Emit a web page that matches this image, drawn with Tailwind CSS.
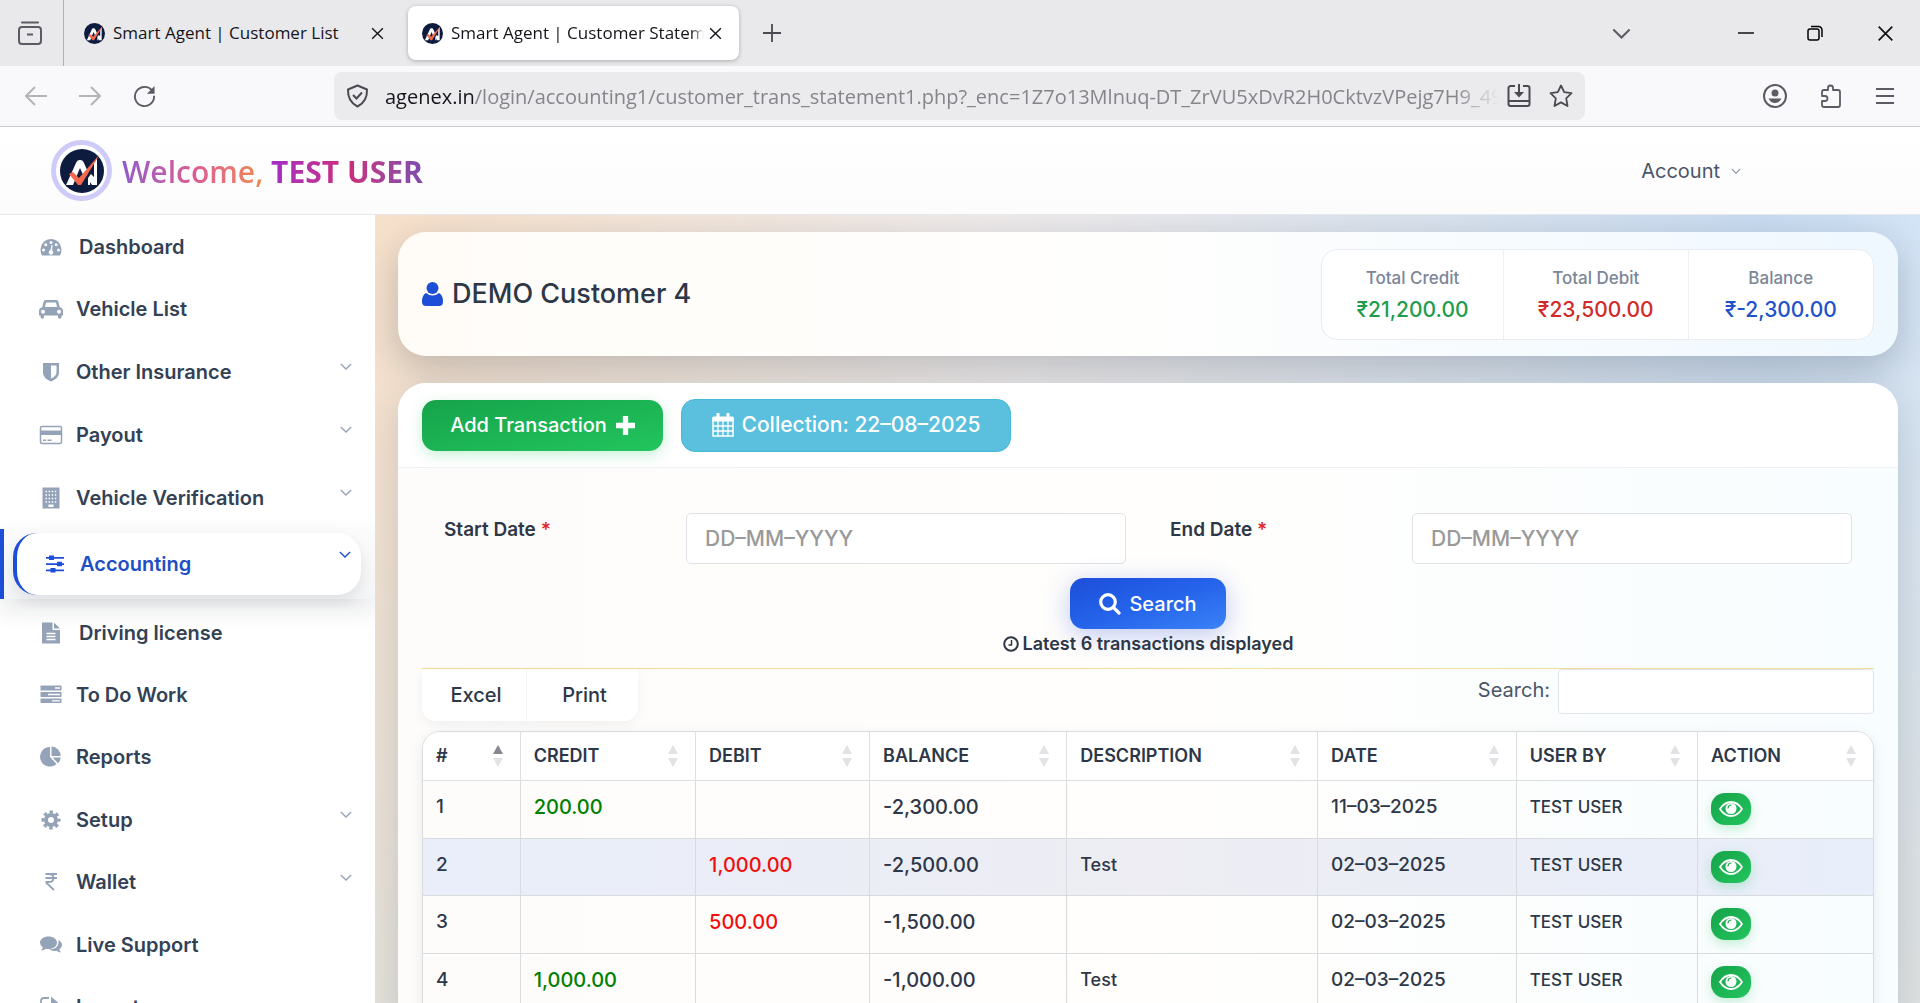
<!DOCTYPE html>
<html lang="en">
  <head>
    <meta charset="UTF-8" />
    <meta name="viewport" content="width=device-width, initial-scale=1.0" />
    <script src="https://cdn.jsdelivr.net/npm/@tailwindcss/browser@4"></script>
    <title>Smart Agent | Customer Statement</title>
  </head>
  <body class="h-screen flex flex-col overflow-hidden bg-white text-[#2d3748] font-[Inter,sans-serif]">
    <!-- shared icons -->
    <svg class="hidden">
      <symbol id="logo" viewBox="0 0 44 44">
        <circle cx="22" cy="22" r="22" fill="#0d1b3e" />
        <path d="M6 36 16 14q1-3 4-3t4 3l4 9-4 5-4-9-7 17zM28 36v-7l3-4 3 3V14l3-5v27h-5l-2-3v3z" fill="#fff" />
        <path d="m9 25 4-2 6 6L40 5 21 36h-3z" fill="#f4694c" />
      </symbol>
      <symbol id="close" viewBox="0 0 14 14">
        <path d="m2 2 10 10M12 2 2 12" fill="none" stroke="currentColor" stroke-width="1.300" />
      </symbol>
      <symbol id="chevron" viewBox="0 0 14 8">
        <path d="m1 1 6 6 6-6" fill="none" stroke="currentColor" stroke-width="1.500" />
      </symbol>
      <symbol id="sort" viewBox="0 0 10 24">
        <path d="m5 1 5 9H0z" fill="#e1e3e6" />
        <path d="m5 23 5-9H0z" fill="#e1e3e6" />
      </symbol>
      <symbol id="sort-asc" viewBox="0 0 10 24">
        <path d="m5 1 5 9H0z" fill="#85888f" />
        <path d="m5 23 5-9H0z" fill="#e1e3e6" />
      </symbol>
      <symbol id="eye" viewBox="0 0 24 16">
        <path d="M1 8q4.500-7 11-7t11 7q-4.500 7-11 7T1 8z" fill="none" stroke="currentColor" stroke-width="1.800" />
        <circle cx="12" cy="7.500" r="5.500" fill="currentColor" />
        <path d="M9 7q.3-2.600 3-3" fill="none" stroke="#1aa850" stroke-width="1.200" stroke-linecap="round" />
      </symbol>
    </svg>

    <!-- browser tabs -->
    <div class="flex h-[66px] shrink-0 items-center bg-[#e9e9eb] text-[17px] text-[#15141a] font-['Open_Sans',sans-serif]">
      <button class="flex h-full w-16 items-center justify-center border-r border-[#b0b0b4] pr-[3px] text-[#5b5b66]" aria-label="Firefox View">
        <svg class="size-6" viewBox="0 0 24 24" fill="none" stroke="currentColor" stroke-width="2">
          <path d="M4 1.500h16" stroke-linecap="round" />
          <rect x="1" y="6" width="22" height="17" rx="3" />
          <path d="M9 13.500h6" />
        </svg>
      </button>
      <div class="flex h-[54px] w-[338px] items-center pl-5 pr-[17px]">
        <svg class="mr-2 size-[21px]"><use href="#logo" /></svg>
        <button class="flex-1 whitespace-nowrap text-left">Smart Agent | Customer List</button>
        <button class="ml-2" aria-label="Close tab"><svg class="size-[15px]"><use href="#close" /></svg></button>
      </div>
      <div class="ml-[6px] flex h-[54px] w-[331px] items-center rounded-lg bg-white pl-[14px] pr-4 shadow-[0_1px_4px_#0004]">
        <svg class="mr-2 size-[21px] shrink-0"><use href="#logo" /></svg>
        <button class="w-[253px] overflow-hidden whitespace-nowrap text-left [mask-image:linear-gradient(to_right,black_95%,transparent)]">Smart Agent | Customer Statement</button>
        <button class="ml-1" aria-label="Close tab"><svg class="size-[15px]"><use href="#close" /></svg></button>
      </div>
      <button class="ml-[23px]" aria-label="New tab">
        <svg class="size-5 text-[#4a4a52]" viewBox="0 0 20 20" fill="none" stroke="currentColor" stroke-width="1.800"><path d="M10 1v18M1 10h18" /></svg>
      </button>
      <div class="ml-auto flex items-center pr-[25px]">
        <button class="mr-[107px]" aria-label="List all tabs"><svg class="h-[11px] w-[19px] text-[#5b5b66]"><use href="#chevron" /></svg></button>
        <button class="mr-[53px]" aria-label="Minimize"><svg class="size-4" viewBox="0 0 16 16"><path d="M0 8h16" stroke="#000" stroke-width="1.400" /></svg></button>
        <button class="mr-[53px]" aria-label="Restore">
          <svg class="size-4" viewBox="0 0 16 16" fill="none" stroke="#000" stroke-width="1.500">
            <rect x="1" y="4" width="11" height="11" rx="2" />
            <path d="M4 1.500h7.500a3.500 3.500 0 0 1 3.500 3.500v7" />
          </svg>
        </button>
        <button aria-label="Close window"><svg class="size-[19px]"><use href="#close" /></svg></button>
      </div>
    </div>

    <!-- browser toolbar -->
    <div class="flex h-[61px] shrink-0 items-center border-b border-[#ccccd1] bg-[#f9f9fb] text-[#5b5b66]">
      <div class="flex w-[334px] items-center gap-8 pl-[25px]">
        <button aria-label="Back" class="text-[#b4b4b9]">
          <svg class="size-[22px]" viewBox="0 0 22 22" fill="none" stroke="currentColor" stroke-width="2"><path d="M22 11H2M10 2l-9 9 9 9" /></svg>
        </button>
        <button aria-label="Forward" class="text-[#b4b4b9]">
          <svg class="size-[22px]" viewBox="0 0 22 22" fill="none" stroke="currentColor" stroke-width="2"><path d="M0 11h20M12 2l9 9-9 9" /></svg>
        </button>
        <button aria-label="Reload">
          <svg class="size-[23px]" viewBox="0 0 24 24" fill="none" stroke="currentColor" stroke-width="2">
            <path d="M20 6a10 10 0 1 0 2 6" stroke-linecap="round" />
            <path d="M22.500 1v8h-8z" fill="currentColor" stroke="none" />
          </svg>
        </button>
      </div>
      <div class="flex h-12 w-[1251px] items-center rounded-lg bg-[#ebebed] px-3">
        <svg class="h-6 w-[23px] shrink-0" viewBox="0 0 23 24" fill="none" stroke="#4a4a52" stroke-width="2">
          <path d="m11.500 1.500 9.500 4q.5 12-9.500 17Q1.500 17.500 2 5.500z" stroke-linejoin="round" />
          <path d="m7 11 3.500 3.500L16 8.500" />
        </svg>
        <div role="textbox" aria-label="Address" class="ml-4 flex-1 overflow-hidden whitespace-nowrap pt-px text-xl text-[#85858c] font-['Open_Sans',sans-serif] [mask-image:linear-gradient(to_right,black_96%,transparent)]"><span class="text-[#15141a]">agenex.in</span>/login/accounting1/customer_trans_statement1.php?_enc=1Z7o13Mlnuq-DT_ZrVU5xDvR2H0CktvzVPejg7H9_49I</div>
        <button aria-label="Install" class="ml-2">
          <svg class="size-6" viewBox="0 0 24 24" fill="none" stroke="#4a4a52" stroke-width="2">
            <path d="M8 2H3.500A2 2 0 0 0 1.500 4v16a2 2 0 0 0 2 2h17a2 2 0 0 0 2-2V4a2 2 0 0 0-2-2H16M2 17h20" />
            <path d="M12 0v9" /><path d="M7 8h10l-5 5.500z" fill="#4a4a52" stroke="none" />
          </svg>
        </button>
        <button aria-label="Bookmark" class="ml-[18px]">
          <svg class="size-6" viewBox="0 0 24 24" fill="none" stroke="#4a4a52" stroke-width="1.800" stroke-linejoin="round">
            <path d="m12 1.500 3.200 6.700 7.300 1-5.300 5.100 1.300 7.700-6.500-3.600L5.500 22l1.300-7.700L1.500 9.200l7.300-1z" />
          </svg>
        </button>
      </div>
      <div class="ml-auto flex items-center gap-8 pr-[25px]">
        <button aria-label="Profile">
          <svg class="size-6" viewBox="0 0 24 24" fill="currentColor">
            <circle cx="12" cy="12" r="11" fill="none" stroke="currentColor" stroke-width="2" />
            <circle cx="12" cy="9" r="3.500" /><path d="M5.500 14.500h13q-2.500 4.500-6.500 4.500t-6.500-4.500z" />
          </svg>
        </button>
        <button aria-label="Extensions">
          <svg class="size-6" viewBox="0 0 24 24" fill="none" stroke="currentColor" stroke-width="1.800" stroke-linejoin="round">
            <path d="M3 10V8q0-2 2-2h4V4a2.500 2.500 0 0 1 5 0v2h5q2 0 2 2v13q0 2-2 2H5q-2 0-2-2v-4h3a2.500 2.500 0 0 0 0-5H3z" />
          </svg>
        </button>
        <button aria-label="Menu">
          <svg class="h-4 w-5" viewBox="0 0 20 16" stroke="currentColor" stroke-width="1.800"><path d="M1 1h18M1 8h18M1 15h18" /></svg>
        </button>
      </div>
    </div>

    <!-- app header -->
    <header class="flex h-[88px] shrink-0 items-center justify-between border-b border-[#e6e8ec] bg-linear-to-b from-white to-[#fcfcfc] pl-[51px] pr-[179px]">
      <div class="flex items-center gap-[10px]">
        <div class="flex size-[61px] items-center justify-center rounded-full border-[5px] border-[#cfcbf8] bg-white">
          <svg class="size-11"><use href="#logo" /></svg>
        </div>
        <h1 class="pt-[2px] text-[30px] leading-10 font-semibold font-['Open_Sans',sans-serif]">
          <span class="bg-linear-to-r from-[#8f5bc9] via-[#dc5a94] to-[#ee8a4a] bg-clip-text text-transparent">Welcome,</span>
          <span class="bg-linear-to-r from-[#a32cc4] via-[#cc2a7c] to-[#7c4bb0] bg-clip-text font-bold text-transparent">TEST USER</span>
        </h1>
      </div>
      <button class="flex items-center gap-[11px] text-xl text-[#4a5568]">
        Account
        <svg class="h-[6px] w-[10px] text-[#8a94a6]"><use href="#chevron" /></svg>
      </button>
    </header>

    <div class="flex min-h-0 flex-1">
      <!-- sidebar -->
      <nav class="w-[375px] shrink-0 overflow-hidden bg-white pt-px text-xl font-semibold text-[#334155]">
        <a href="#" class="flex h-[62px] items-center pl-[39px]">
          <svg class="mr-4 size-6 text-[#94a3b8]" viewBox="0 0 24 24" fill="currentColor">
            <path d="M1.500 14.500a10.500 10.500 0 0 1 21 0q0 3-1.500 6H3q-1.500-3-1.500-6z" />
            <g fill="#fff"><circle cx="4.500" cy="15" r="1.500" /><circle cx="6.800" cy="9.800" r="1.500" /><circle cx="12" cy="7.500" r="1.500" /><circle cx="17.200" cy="9.800" r="1.500" /><circle cx="19.500" cy="15" r="1.500" /><path d="m12.500 10 1.200.3-.7 5a2.300 2.300 0 1 1-1.500-.2z" /></g>
          </svg>
          Dashboard
        </a>
        <a href="#" class="flex h-[62px] items-center pl-[39px]">
          <svg class="mr-[13px] size-6 text-[#94a3b8]" viewBox="0 0 24 24" fill="currentColor" fill-rule="evenodd">
            <path d="M6.500 3h11q1.500 0 2 2l1.300 5.200Q24 11 24 14v4.500h-1.500V20a1.700 1.700 0 0 1-3.500 0v-1.500H5V20a1.700 1.700 0 0 1-3.500 0v-1.500H0V14q0-3 3.200-3.800L4.500 5q.5-2 2-2zM7 5.500 6 10h12l-1-4.500zM4 12.800a2 2 0 1 0 0 4 2 2 0 0 0 0-4zm16 0a2 2 0 1 0 0 4 2 2 0 0 0 0-4z" />
          </svg>
          Vehicle List
        </a>
        <a href="#" class="flex h-[63px] items-center pl-[39px] pr-[23px]">
          <svg class="mr-[13px] size-6 text-[#94a3b8]" viewBox="0 0 24 24" fill="currentColor" fill-rule="evenodd">
            <path d="M4 3h16v10q0 5-8 8.500Q4 18 4 13zm8 2.500v13q5.500-2.500 5.500-6v-7z" />
          </svg>
          Other Insurance
          <svg class="mb-[10px] ml-auto h-[7px] w-3 text-[#94a3b8]"><use href="#chevron" /></svg>
        </a>
        <a href="#" class="flex h-[63px] items-center pl-[39px] pr-[23px]">
          <svg class="mr-[13px] size-6 text-[#94a3b8]" viewBox="0 0 24 24" fill="currentColor">
            <rect x="1.500" y="3.500" width="21" height="17" rx="1.500" fill="none" stroke="currentColor" stroke-width="1.500" />
            <path d="M1 7.500h22v4.500H1zM4 16.500h3V18H4zM8.500 16.500h4V18h-4z" />
          </svg>
          Payout
          <svg class="mb-[10px] ml-auto h-[7px] w-3 text-[#94a3b8]"><use href="#chevron" /></svg>
        </a>
        <a href="#" class="flex h-[63px] items-center pl-[39px] pr-[23px]">
          <svg class="mr-[13px] size-6 text-[#94a3b8]" viewBox="0 0 24 24" fill="currentColor">
            <path d="M3.500 1.500h17v21h-17z" />
            <path d="M6.500 5.500h11M6.500 9h11M6.500 12.500h11M6.500 16h11" stroke="#fff" stroke-width="1.500" stroke-dasharray="1.500 1.600" />
            <path d="M9.500 18.500h5v2.500h-5z" fill="#fff" />
          </svg>
          Vehicle Verification
          <svg class="mb-[10px] ml-auto h-[7px] w-3 text-[#94a3b8]"><use href="#chevron" /></svg>
        </a>
        <div class="relative h-[70px] border-l-4 border-[#1d4ed8] bg-linear-to-b from-[#fbfbfb] to-[#f4f5f6] py-1 pl-[9px] pr-[14px] shadow-[0_10px_24px_#0f172a1c]">
          <a href="#" class="flex h-[62px] items-center rounded-[24px] border-l-4 border-[#1d4ed8] bg-white pl-[26px] pr-[10px] text-[#1e4fc4] shadow-[0_6px_14px_#0f172a18]">
            <svg class="mr-[13px] size-6 text-[#1d4ed8]" viewBox="0 0 24 24" fill="currentColor">
              <path d="M3 5h18v1.800H3zM3 11.200h18V13H3zM3 17.500h18v1.800H3z" /><path d="M6 3.500h5v4.500H6zM14 9.800h5v4.500h-5zM7.500 16h5v4.500h-5z" />
            </svg>
            Accounting
            <svg class="mb-5 ml-auto h-[7px] w-3"><use href="#chevron" /></svg>
          </a>
        </div>
        <a href="#" class="mt-[3px] flex h-[62px] items-center pl-[39px]">
          <svg class="mr-4 size-6 text-[#94a3b8]" viewBox="0 0 24 24" fill="currentColor">
            <path d="M3 1.500h10.500V9H21v13.500H3zM15 1.500 21 7.500h-6z" />
            <path d="M7.500 12.500h9M7.500 15.500h9M7.500 18.500h9" stroke="#fff" stroke-width="1.300" />
          </svg>
          Driving license
        </a>
        <a href="#" class="flex h-[62px] items-center pl-[39px]">
          <svg class="mr-[13px] size-6 text-[#94a3b8]" viewBox="0 0 24 24" fill="currentColor">
            <rect x="1.500" y="2.500" width="21" height="5" rx=".8" /><rect x="1.500" y="9" width="21" height="5" rx=".8" /><rect x="1.500" y="15.500" width="21" height="4.500" rx=".8" />
            <path d="M16 5h5M9 11.500h12M13 17.800h8" stroke="#fff" stroke-width="1.300" />
          </svg>
          To Do Work
        </a>
        <a href="#" class="flex h-[62px] items-center pl-[39px]">
          <svg class="mr-[13px] size-6 text-[#94a3b8]" viewBox="0 0 24 24" fill="currentColor">
            <path d="M11 2v10l6.500 7A9.800 9.800 0 1 1 11 2z" /><path d="M12.500 1.500a9.500 9.500 0 0 1 9.200 9.500h-9.200z" /><path d="M13.500 12.500h8.200q-.2 3.300-2.700 5.700z" />
          </svg>
          Reports
        </a>
        <a href="#" class="flex h-[63px] items-center pl-[39px] pr-[23px]">
          <svg class="mr-[13px] size-6 text-[#94a3b8]" viewBox="0 0 24 24" fill="none" stroke="currentColor">
            <circle cx="12" cy="12" r="5" stroke-width="4" />
            <circle cx="12" cy="12" r="8" stroke-width="3" stroke-dasharray="3.400 2.880" stroke-dashoffset="1.700" />
          </svg>
          Setup
          <svg class="mb-[10px] ml-auto h-[7px] w-3 text-[#94a3b8]"><use href="#chevron" /></svg>
        </a>
        <a href="#" class="flex h-[62px] items-center pl-[39px] pr-[23px]">
          <svg class="mr-[13px] size-6 text-[#94a3b8]" viewBox="0 0 24 24" fill="none" stroke="currentColor" stroke-width="1.800">
            <path d="M6.500 4H18M6.500 8H18M6.500 12H10q4.500 0 4.500-4T10 4M7 12.500l8 7.500" />
          </svg>
          Wallet
          <svg class="mb-[10px] ml-auto h-[7px] w-3 text-[#94a3b8]"><use href="#chevron" /></svg>
        </a>
        <a href="#" class="flex h-[63px] items-center pl-[39px]">
          <svg class="mr-[13px] size-6 text-[#94a3b8]" viewBox="0 0 24 24" fill="currentColor">
            <path d="M9.500 3.500c4.800 0 8.500 2.700 8.500 6.200s-3.700 6.300-8.500 6.300q-1.500 0-2.700-.3Q4.600 17.600 2 17.600q1.600-1.300 1.800-3.200Q1 12.500 1 9.700c0-3.500 3.700-6.200 8.500-6.200z" />
            <path d="M19.300 7q3.700 1.800 3.700 5 0 2.600-2.600 4.500.2 1.600 1.800 3-2.700 0-4.700-1.700-4 .8-7.500-1.200 8.500 0 9.500-6.500.2-1.500-.2-3.100z" />
          </svg>
          Live Support
        </a>
        <a href="#" class="flex h-[62px] items-center pl-[39px]">
          <svg class="mr-[13px] size-6 text-[#94a3b8]" viewBox="0 0 24 24" fill="none" stroke="currentColor" stroke-width="1.800">
            <path d="M10 3H5q-3 0-3 3v12q0 3 3 3h12q3 0 3-3v-4" /><path d="M12 1.500 19.500 8 12 14z" fill="currentColor" stroke="none" />
          </svg>
          Import
        </a>
      </nav>

      <!-- content -->
      <main class="min-w-0 flex-1 overflow-hidden bg-[linear-gradient(to_bottom,transparent,#e0e1ddd8),linear-gradient(to_right,#f7e0ca,#efebeb_40%,#c9dcf1_90%,#d3e4f6)] pt-[17px] pl-[23px] pr-[22px]">
        <section class="flex h-[124px] items-center justify-between rounded-[28px] bg-linear-to-r from-[#fffcf8] via-[#fefefd] to-[#eff8ff] px-6 shadow-[0_12px_36px_#0f172a38]">
          <h2 class="flex items-center gap-[9px] text-[27px] leading-9 font-medium">
            <svg class="h-6 w-[21px] text-[#1d4ed8]" viewBox="0 0 21 24" fill="currentColor">
              <circle cx="10.500" cy="6" r="6" /><path d="M4 11q6.500 5 13 0 4 2 4 8.500 0 4.500-4 4.500H4q-4 0-4-4.500Q0 13 4 11z" />
            </svg>
            DEMO Customer 4
          </h2>
          <dl class="grid h-[91px] w-[553px] grid-cols-[182px_1fr_1fr] divide-x divide-[#edf0f3] rounded-2xl border border-[#e8ecf1] bg-white text-center">
            <div class="pt-3">
              <dt class="text-[17px] leading-8 font-medium text-[#7b8698]">Total Credit</dt>
              <dd class="text-[21px] leading-8 font-medium text-[#1f9d4d]">₹21,200.00</dd>
            </div>
            <div class="pt-3">
              <dt class="text-[17px] leading-8 font-medium text-[#7b8698]">Total Debit</dt>
              <dd class="text-[21px] leading-8 font-medium text-[#d12b2b]">₹23,500.00</dd>
            </div>
            <div class="pt-3">
              <dt class="text-[17px] leading-8 font-medium text-[#7b8698]">Balance</dt>
              <dd class="text-[21px] leading-8 font-medium text-[#2251c9]">₹-2,300.00</dd>
            </div>
          </dl>
        </section>

        <section class="mt-[27px] rounded-t-[28px] bg-linear-to-r from-[#fdfcfb] via-[#fffefc] to-[#f8fdff] shadow-[0_12px_36px_#0f172a24]">
          <div class="flex h-[85px] items-center gap-[18px] rounded-t-[28px] border-b border-[#f0f1f3] bg-white px-6 text-xl font-medium text-white">
            <button class="flex h-[51px] w-[241px] items-center justify-center gap-[9px] rounded-[14px] bg-linear-to-br from-[#16a34a] to-[#22c55e] shadow-[0_4px_14px_#22c55e40]">
              Add Transaction
              <svg class="size-[19px]" viewBox="0 0 18 18" fill="currentColor"><path d="M6.500 0h5v6.500H18v5h-6.500V18h-5v-6.500H0v-5h6.500z" /></svg>
            </button>
            <button class="flex h-[53px] w-[330px] items-center justify-center gap-2 rounded-[14px] border border-[#46b8da] bg-[#5bc0de] text-[21px]">
              <svg class="h-6 w-[22px]" viewBox="0 0 22 24" fill="none" stroke="currentColor">
                <path d="M1 5h20v18H1z" stroke-width="1.500" /><path d="M1 4h20v4H1z" fill="currentColor" />
                <path d="M6 1v6M16 1v6" stroke-width="3" stroke-linecap="round" />
                <path d="M6 8v15M11 8v15M16 8v15M1 13h20M1 18h20" stroke-width="1.300" />
              </svg>
              Collection: 22–08–2025
            </button>
          </div>

          <div class="px-6 pt-[45px]">
            <form class="border-b border-[#f3dc94] pb-[9px]" onsubmit="return false">
              <div class="grid grid-cols-6">
                <label for="start" class="px-[22px] pt-[3px] text-[19px] leading-7 font-semibold">Start Date <span class="text-[#dc2626]">*</span></label>
                <div class="col-span-2 px-[22px]">
                  <input id="start" type="text" placeholder="DD–MM–YYYY" class="h-[51px] w-full rounded-[5px] border border-[#dfe3e8] bg-white px-[18px] text-[21px] font-medium placeholder:text-[#999]" />
                </div>
                <label for="end" class="px-[22px] pt-[3px] text-[19px] leading-7 font-semibold">End Date <span class="text-[#dc2626]">*</span></label>
                <div class="col-span-2 px-[22px]">
                  <input id="end" type="text" placeholder="DD–MM–YYYY" class="h-[51px] w-full rounded-[5px] border border-[#dfe3e8] bg-white px-[18px] text-[21px] font-medium placeholder:text-[#999]" />
                </div>
              </div>
              <div class="mt-[14px] flex flex-col items-center">
                <button class="flex h-[51px] w-[156px] items-center justify-center gap-2 rounded-[14px] bg-linear-to-br from-[#1d4ed8] via-[#2563eb] to-[#3b82f6] text-xl font-medium text-white shadow-[0_6px_26px_#2f4fe050]">
                  <svg class="size-[22px]" viewBox="0 0 22 22" fill="none" stroke="currentColor" stroke-width="3.200" stroke-linecap="round"><circle cx="9" cy="9" r="7.300" /><path d="m14.500 14.500 5.500 5.500" /></svg>
                  Search
                </button>
                <p class="flex items-center gap-1 text-lg leading-[30px] font-semibold">
                  <svg class="size-4" viewBox="0 0 16 16" fill="none" stroke="currentColor" stroke-width="2"><circle cx="8" cy="8" r="6.800" /><path d="M8.500 4v5H5.500" stroke-width="1.500" /></svg>
                  Latest 6 transactions displayed
                </p>
              </div>
            </form>

            <div class="flex items-start justify-between">
              <div class="flex rounded-b-[14px] text-xl leading-[52px] font-medium shadow-[0_4px_12px_#0f172a0d]">
                <button class="w-[105px] rounded-bl-[14px] border-r border-[#f4f5f7] bg-white pl-1">Excel</button>
                <button class="w-[111px] rounded-br-[14px] bg-white pl-1">Print</button>
              </div>
              <div class="flex items-center gap-2 text-xl">
                <label for="filter" class="pb-1 text-[#4a5568]">Search:</label>
                <input id="filter" type="search" class="h-[45px] w-[316px] rounded-[4px] border border-[#e2e6ea] bg-white px-3 text-lg" />
              </div>
            </div>

            <div class="mt-[10px] overflow-hidden rounded-t-[18px] border border-[#d9dcdf] shadow-[0_4px_14px_#0f172a14]">
              <table class="w-full table-fixed text-left">
                <colgroup>
                  <col class="w-[6.7%]" /><col class="w-[12.1%]" /><col class="w-[12%]" /><col class="w-[13.6%]" />
                  <col class="w-[17.3%]" /><col class="w-[13.7%]" /><col class="w-[12.5%]" /><col class="w-[12.1%]" />
                </colgroup>
                <thead class="bg-white text-lg [&_th]:h-12 [&_th]:border-r [&_th]:border-b [&_th]:border-[#dddfe2] [&_th]:px-[13px] [&_th]:font-semibold [&_th:last-child]:border-r-0 [&_div]:flex [&_div]:items-center [&_div]:justify-between [&_div]:pr-1 [&_svg]:h-6 [&_svg]:w-[10px]">
                  <tr>
                    <th><div>#<svg><use href="#sort-asc" /></svg></div></th>
                    <th><div>CREDIT<svg><use href="#sort" /></svg></div></th>
                    <th><div>DEBIT<svg><use href="#sort" /></svg></div></th>
                    <th><div>BALANCE<svg><use href="#sort" /></svg></div></th>
                    <th><div>DESCRIPTION<svg><use href="#sort" /></svg></div></th>
                    <th><div>DATE<svg><use href="#sort" /></svg></div></th>
                    <th><div>USER BY<svg><use href="#sort" /></svg></div></th>
                    <th><div>ACTION<svg><use href="#sort" /></svg></div></th>
                  </tr>
                </thead>
                <tbody class="text-[19px] leading-7 font-medium [&_tr]:h-[58px] [&_tr:nth-child(even)]:h-[57px] [&_td]:border-r [&_td]:border-b [&_td]:border-[#d9dcdf] [&_td]:px-[13px] [&_td]:pt-3 [&_td]:align-top [&_td:last-child]:border-r-0 [&_button]:flex [&_button]:h-8 [&_button]:w-10 [&_button]:items-center [&_button]:justify-center [&_button]:rounded-[14px] [&_button]:bg-linear-to-br [&_button]:from-[#16a34a] [&_button]:to-[#22c55e] [&_button]:text-white [&_button]:shadow-[0_4px_12px_#22c55e40] [&_svg]:h-4 [&_svg]:w-6">
                  <tr>
                    <td>1</td><td class="text-xl text-[#008000]">200.00</td><td></td><td class="text-xl">-2,300.00</td><td></td><td>11–03–2025</td><td class="text-[17px]">TEST USER</td>
                    <td><button aria-label="View"><svg><use href="#eye" /></svg></button></td>
                  </tr>
                  <tr class="bg-linear-to-r from-[#e9eefa] via-[#ededf3] to-[#e8eefa]">
                    <td>2</td><td></td><td class="text-xl text-[#f00f0f]">1,000.00</td><td class="text-xl">-2,500.00</td><td class="text-lg">Test</td><td>02–03–2025</td><td class="text-[17px]">TEST USER</td>
                    <td><button aria-label="View"><svg><use href="#eye" /></svg></button></td>
                  </tr>
                  <tr>
                    <td>3</td><td></td><td class="text-xl text-[#f00f0f]">500.00</td><td class="text-xl">-1,500.00</td><td></td><td>02–03–2025</td><td class="text-[17px]">TEST USER</td>
                    <td><button aria-label="View"><svg><use href="#eye" /></svg></button></td>
                  </tr>
                  <tr>
                    <td>4</td><td class="text-xl text-[#008000]">1,000.00</td><td></td><td class="text-xl">-1,000.00</td><td class="text-lg">Test</td><td>02–03–2025</td><td class="text-[17px]">TEST USER</td>
                    <td><button aria-label="View"><svg><use href="#eye" /></svg></button></td>
                  </tr>
                </tbody>
              </table>
            </div>
          </div>
        </section>
      </main>
    </div>
  </body>
</html>
